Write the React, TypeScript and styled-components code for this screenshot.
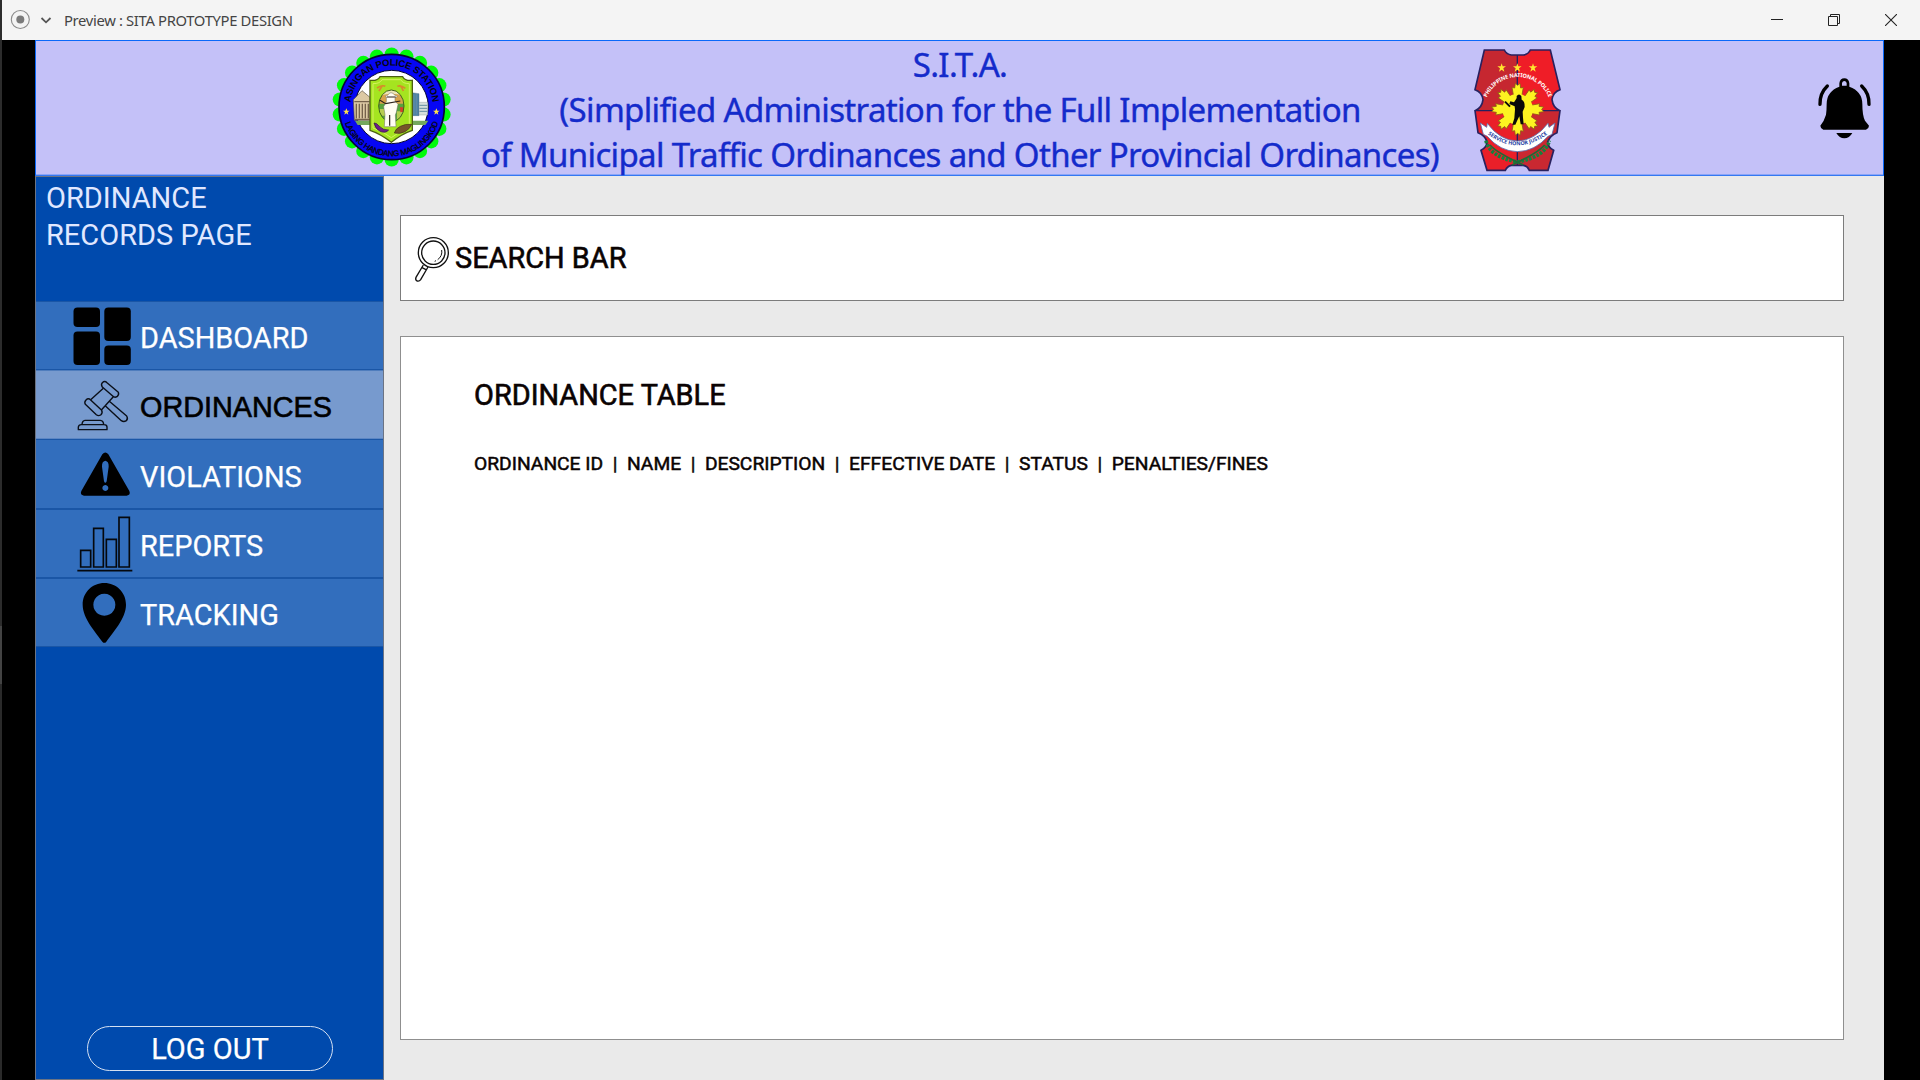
import React from "react";
import styled, { createGlobalStyle, css } from "styled-components";

const Global = createGlobalStyle`
  * { box-sizing: border-box; }
  html, body { margin: 0; height: 100%; background: #000; overflow: hidden; }
  svg { display: block; flex: none; }
`;

const Window = styled.div`
  width: 1920px;
  height: 1080px;
  display: flex;
  background: #000;
  font-family: Roboto, sans-serif;
`;
const Edge = styled.div`
  width: 2px;
  background: linear-gradient(#2c2c2c 0 626px, #434343 626px 684px, #2a2a2a 684px);
`;
const Frame = styled.div`
  flex: 1;
  display: flex;
  flex-direction: column;
`;
const TitleBar = styled.div`
  height: 40px;
  background: #f4f4f4;
  display: flex;
  align-items: center;
  padding: 0 23px 0 8px;
`;
const WindowTitle = styled.span`
  flex: 1;
  font: 14.8px/20px "Noto Sans", sans-serif;
  letter-spacing: -0.34px;
  color: #444;
  margin-left: 12px;
`;
const WindowButtons = styled.div`
  display: flex;
  gap: 45px;
`;
const Stage = styled.div`
  flex: 1;
  width: 1849px;
  margin-left: 33px;
  display: flex;
  flex-direction: column;
  background: #eaeaea;
`;
const Header = styled.header`
  height: 136px;
  border: 1px solid #0a69fa;
  border-bottom: 1px solid #3478f2;
  box-shadow: inset 0 -1px #8ca5f7;
  background: #c4c1f8;
  display: flex;
  padding-left: 284px;
`;
const Seal = styled.svg`
  width: 145px;
  height: 135px;
  margin-left: -1px;
`;
const Badge = styled.svg`
  width: 115px;
  height: 140px;
  margin: -1px 241px 0 5px;
`;
const Bell = styled.svg`
  width: 56px;
  height: 65px;
  margin-top: 34px;
`;
const Heading = styled.h1`
  width: 991px;
  margin: 0;
  padding: 1px 0 0 1px;
  text-align: center;
  white-space: nowrap;
  font: 400 33px/45px "Noto Sans", sans-serif;
  letter-spacing: -0.66px;
  color: #142bcb;
  -webkit-text-stroke: 0.4px #142bcb;
`;
const HeadingLine = styled.span`
  display: block;
`;
const Body = styled.div`
  flex: 1;
  display: flex;
`;
const Sidebar = styled.aside`
  width: 349px;
  border: 1px solid #6c7484;
  background: #004aad;
  display: flex;
  flex-direction: column;
`;
const PageName = styled.div`
  height: 124px;
  padding: 3px 0 0 10px;
  font-size: 29px;
  line-height: 37px;
  color: #e0e8ff;
`;
const NavItem = styled.div<{ $active?: boolean }>`
  height: 69.2px;
  display: flex;
  align-items: center;
  padding-left: 34px;
  background: ${(p) => (p.$active ? "#779ace" : "#326ebd")};
  border-top: 1px solid ${(p) => (p.$active ? "#4f7dbd" : "#1a56a6")};
  border-bottom: 1px solid ${(p) => (p.$active ? "#5b86c4" : "#1a56a6")};
`;
const NavIcon = styled.svg`
  width: 65px;
  height: 67px;
`;
const NavLabel = styled.span<{ $active?: boolean }>`
  padding-top: 5.4px;
  margin-left: 5px;
  font-size: 28.9px;
  line-height: 36px;
  color: #fff;
  -webkit-text-stroke: 0.25px #fff;
  ${(p) =>
    p.$active &&
    css`
      font-family: "Liberation Sans", Arial, sans-serif;
      font-size: 28.8px;
      padding-top: 4.4px;
      color: #000;
      -webkit-text-stroke: 0.6px #000;
    `}
`;
const LogOut = styled.button`
  width: 246px;
  height: 45px;
  margin: auto 0 8px 51px;
  padding: 0;
  border: 1px solid #d4e0f2;
  border-radius: 23px;
  background: none;
  color: #fff;
  font: 29px/34px Roboto, sans-serif;
  -webkit-text-stroke: 0.25px #fff;
`;
const Main = styled.main`
  flex: 1;
  display: flex;
  flex-direction: column;
  gap: 35px;
  padding: 39px 40px 40px 16px;
`;
const SearchBox = styled.div`
  height: 86px;
  border: 1px solid #7c7c7c;
  background: #fff;
  display: flex;
  align-items: center;
  padding-left: 13px;
  font-size: 28.9px;
  line-height: 36px;
  color: #0a0303;
  -webkit-text-stroke: 0.6px #0a0303;
`;
const SearchIcon = styled.svg`
  width: 38px;
  height: 48px;
  margin-top: 2px;
`;
const SearchLabel = styled.span`
  margin-left: 3px;
`;
const TableCard = styled.section`
  flex: 1;
  border: 1px solid #8f8f8f;
  background: #fff;
  padding: 40px 0 0 73px;
  color: #0a0303;
`;
const TableTitle = styled.h2`
  margin: 0;
  font-size: 28.9px;
  line-height: 36px;
  font-weight: 400;
  -webkit-text-stroke: 0.6px #0a0303;
`;
const TableColumns = styled.div`
  margin-top: 39px;
  font-size: 19.24px;
  line-height: 24px;
  white-space: pre;
  -webkit-text-stroke: 0.5px #0a0303;
`;

const range = (n: number) => Array.from({ length: n }, (_, i) => i);

const PoliceSeal = () => (
  <Seal viewBox="0 0 435 405">
    <defs>
      <path id="sealTop" d="M130.3 285.7 A124 124 0 1 1 305.7 285.7" />
      <path id="sealBottom" d="M89.8 124 A148 148 0 1 0 346.2 124" />
      <clipPath id="sealOval"><ellipse cx="217" cy="195" rx="38" ry="48" /></clipPath>
    </defs>
    {range(22).map((i) => (
      <circle key={i} cx={218 + 157 * Math.cos((i * Math.PI) / 11 - Math.PI / 2)} cy={198 + 157 * Math.sin((i * Math.PI) / 11 - Math.PI / 2)} r="21.5" fill="#00fb0a" />
    ))}
    <circle cx="218" cy="198" r="158" fill="#0606f4" stroke="#050530" strokeWidth="5" />
    <circle cx="218" cy="198" r="110" fill="#fff" stroke="#050530" strokeWidth="3" />
    <text fontFamily="Liberation Sans, sans-serif" fontWeight="700" fontSize="28.5" fill="#05050f" textAnchor="middle" letterSpacing="-0.6">
      <textPath href="#sealTop" startOffset="50%">ASINGAN POLICE STATION</textPath>
    </text>
    <text fontFamily="Liberation Sans, sans-serif" fontSize="24" fill="#05050f" stroke="#05050f" strokeWidth="1" textAnchor="middle" letterSpacing="-0.8">
      <textPath href="#sealBottom" startOffset="50%">LAGING HANDANG MAGLINGKOD</textPath>
    </text>
    {[82, 352].map((x) => (
      <path key={x} transform={`translate(${x} 212)`} d="M0 -10 3 -3 10 -3 4 2 6 9 0 5 -6 9 -4 2 -10 -3 -3 -3Z" fill="#ffe34a" />
    ))}
    <path d="M108 239h220l-9 13H116Z" fill="#74a85d" />
    <path d="M103 176 129 149l25 21v68h-48Z" fill="#dcc9a4" stroke="#584b3c" strokeWidth="2" />
    <path d="M106 182h46M107 235h46M112 188v44M121 188v44M130 188v44M139 188v44M148 188v44" stroke="#75624c" strokeWidth="4" />
    <path d="M279 155 300 158v66h-21Z" fill="#4d83a7" stroke="#34566b" />
    <path d="M300 184h26v38h-26Z" fill="#d6dfdd" stroke="#738183" />
    <path d="M301 193h24M301 202h24M301 211h24M285 160v60M292 160v60" stroke="#648da0" strokeWidth="3" />
    <path d="M153 118Q177 120 183 107H251Q257 120 280 118V268Q249 278 217 304Q184 278 153 268Z" fill="#a5e420" stroke="#4c5f12" strokeWidth="4" />
    <path d="M162 128Q183 128 189 116H245Q251 128 271 128V261Q242 270 217 290Q190 270 162 261Z" fill="none" stroke="#d5f25e" strokeWidth="3" />
    <path d="M174 141q16-10 25-5M180 150q8-14 12-17M235 136q11-4 24 6M242 133q8 6 11 17" stroke="#d78b2a" strokeWidth="5" fill="none" />
    <g clipPath="url(#sealOval)">
      <path d="M175 140h90v110h-90Z" fill="#eee6b8" />
      <path d="M175 168q40-20 90 0v28h-90Z" fill="#d8a34b" />
      <path d="M175 188h90v70h-90Z" fill="#58a33d" />
      <path d="M179 204h24v20h-24ZM234 211h24v25h-24Z" fill="#b8cd52" />
      <path d="M243 198l14 2-1 12-12 2Z" fill="#d83f29" />
    </g>
    <ellipse cx="217" cy="195" rx="38" ry="48" fill="none" stroke="#3e6416" strokeWidth="3" />
    <path d="M199 166q3-4 7-3 9-16 22 0 6 0 7 4l-7 3v10l9 10-5 24-3 8 2 35h-35l2-36-4-24 8-15v-13Z" fill="#fffdf3" stroke="#6f6d60" strokeWidth="1.5" />
    <path d="M203 168h27M183 178 200 188 244 180M212 222v32" stroke="#2b211b" strokeWidth="3.5" fill="none" />
    <path d="M165 246q8-1 15 9 12 13 29 12-9 11-26 4-14-7-18-25Z" fill="#6d2187" stroke="#31104a" strokeWidth="2" />
    <path d="M226 276q4-14 18-20 14-8 34-6-5 14-20 22-14 8-32 4Z" fill="#76552a" stroke="#3f3215" strokeWidth="2" />
  </Seal>
);

const SHIELD =
  "M73 30H133Q139 43 154 45H190Q205 43 211 30H271L300 149Q279 156 276 179Q279 204 300 212L291 278Q270 286 263 306Q263 322 281 331L264 391H208Q202 378 190 376H154Q142 378 136 391H81L63 331Q81 322 81 306Q76 286 54 278L45 212Q66 204 69 179Q66 156 45 149Z";

const PnpBadge = () => (
  <Badge viewBox="0 0 345 420">
    <defs>
      <path id="badgeArc" d="M73 222 A101 101 0 1 1 274 222" />
      <path id="ribbonArc" d="M72 274 Q172 358 274 274" />
      <clipPath id="badgeShape">
        <path d={SHIELD} />
      </clipPath>
    </defs>
    <g clipPath="url(#badgeShape)">
      <path d="M0 0h172v212H0Z" fill="#c62730" />
      <path d="M172 0h173v212H172Z" fill="#ef1d27" />
      <path d="M0 212h172v208H0Z" fill="#ea1f29" />
      <path d="M172 212h173v208H172Z" fill="#c92831" />
      <path d="M172 20v380M40 212h265" stroke="#24205f" strokeWidth="4" />
    </g>
    <path d={SHIELD} fill="none" stroke="#28215f" strokeWidth="5" />
    {[125, 172, 219].map((x) => (
      <path key={x} transform={`translate(${x} 83)`} d="M0 -13 3 -4 13 -4 5 2 8 12 0 6 -8 12 -5 2 -13 -4 -3 -4Z" fill="#ffe52e" />
    ))}
    <text fontFamily="Noto Sans, sans-serif" fontWeight="700" fontSize="16.5" fill="#fff" textAnchor="middle" letterSpacing="-0.5">
      <textPath href="#badgeArc" startOffset="50%">PHILIPPINE NATIONAL POLICE</textPath>
    </text>
    {range(8).map((i) => (
      <path key={i} transform={`translate(173 208) rotate(${i * 45})`} d="M-12 -38 -17 -66 -9 -64 -7 -78 0 -72 7 -78 9 -64 17 -66 12 -38Z" fill="#fdf321" stroke="#8f5a13" strokeWidth="2.5" />
    ))}
    <circle cx="173" cy="208" r="46" fill="#fdf321" />
    <path d="M170 168q7-9 14 0l1 11q10 4 9 22l-6 14 1 18 2 20h-9l-4-24-6 12-6 13h-9l6-19 2-27-1-9-16-7 3-8 11 3 6-9 2-4Z" fill="#090909" />
    <path d="M135 185l15 15" stroke="#090909" strokeWidth="6" />
    <path d="M78 302Q88 350 172 366Q256 350 268 302" fill="none" stroke="#16813c" strokeWidth="11" strokeDasharray="8 4" />
    <path d="M90 315Q110 338 190 375M254 315Q235 338 156 375" fill="none" stroke="#1c6b35" strokeWidth="5" />
    <path d="M61 249 80 262 82 250Q120 302 172 303Q224 302 264 250L267 262 285 249 276 283 264 289Q224 334 172 335Q120 334 82 289L70 283Z" fill="#fff" stroke="#5a6eae" strokeWidth="2.5" />
    <text fontFamily="Noto Sans, sans-serif" fontWeight="700" fontSize="16" fill="#2540a3" textAnchor="middle">
      <textPath href="#ribbonArc" startOffset="50%">SERVICE HONOR JUSTICE</textPath>
    </text>
  </Badge>
);

const DashboardIcon = () => (
  <NavIcon viewBox="70 302 65 67">
    <rect x="73.5" y="307.5" width="26.5" height="19.5" rx="4" />
    <rect x="73.5" y="331.5" width="26.5" height="33.5" rx="4" />
    <rect x="104.3" y="307.5" width="26.5" height="33.5" rx="4" />
    <rect x="104.3" y="345.5" width="26.5" height="19.5" rx="4" />
  </NavIcon>
);
const GavelIcon = () => (
  <NavIcon viewBox="120 603 195 201" fill="none" stroke="#0a0f18" strokeWidth="4.2" strokeLinejoin="round">
    <path d="M217 638q7-7 14 0l34 29q3 7-4 13-7 4-12-1l-32-28q-5-7 0-13Z" />
    <path d="M168 690q7-7 14 0l33 31q4 7-3 14-7 4-13-1l-33-31q-4-7 2-13Z" />
    <path d="M220 655 182 689M250 680 214 720M238 694l52 44q5 8-1 14-8 5-15 0l-50-46" />
    <path d="M145 779v-8q1-7 9-7h68q9 0 9 7v8ZM156 763q1-11 9-12h46q9 1 10 12" />
  </NavIcon>
);
const WarningIcon = () => (
  <NavIcon viewBox="120 31 195 201">
    <path
      fillRule="evenodd"
      d="M217 74q9-11 18 0l63 110q5 12-8 14H162q-13-2-8-14ZM226 93q-11 2-10 18l6 44q4 9 8 0l6-44q1-16-10-18ZM226 166a9 9 0 1 0 .1 0Z"
    />
  </NavIcon>
);
const ReportsIcon = () => (
  <NavIcon viewBox="120 240 195 201" fill="none" stroke="#05080d" strokeWidth="5">
    <path d="M152 361h30v50h-30ZM191 295h29v116h-29ZM229 328h30v83h-30ZM267 262h31v149h-31ZM142 422h165" />
  </NavIcon>
);
const TrackingIcon = () => (
  <NavIcon viewBox="120 447 195 201">
    <path fillRule="evenodd" d="M223 459c36 0 65 28 65 65 0 42-41 84-59 111q-6 7-12 0c-18-27-59-69-59-111 0-37 29-65 65-65ZM223 491a33 33 0 1 0 .1 0Z" />
  </NavIcon>
);

const NAV = [
  { label: "DASHBOARD", Icon: DashboardIcon },
  { label: "ORDINANCES", Icon: GavelIcon, active: true },
  { label: "VIOLATIONS", Icon: WarningIcon },
  { label: "REPORTS", Icon: ReportsIcon },
  { label: "TRACKING", Icon: TrackingIcon },
];
const COLUMNS = ["ORDINANCE ID", "NAME", "DESCRIPTION", "EFFECTIVE DATE", "STATUS", "PENALTIES/FINES"];

export default function App() {
  return (
    <Window>
      <Global />
      <Edge />
      <Frame>
        <TitleBar>
          <svg width="42" height="22" viewBox="10 9 42 22" fill="none">
            <circle cx="20.3" cy="19.5" r="9" stroke="#8a8a8a" strokeWidth="1.1" />
            <circle cx="20.3" cy="19.5" r="4" fill="#7b7b7b" />
            <path d="M41.5 18l4.5 4.3 4.5-4.3" stroke="#555" strokeWidth="1.8" />
          </svg>
          <WindowTitle>Preview : SITA PROTOTYPE DESIGN</WindowTitle>
          <WindowButtons>
            <svg width="12" height="12" viewBox="0 0 12 12"><path d="M0 5.5h12" stroke="#222" /></svg>
            <svg width="12" height="12" viewBox="0 0 12 12" fill="none" stroke="#222"><path d="M.5 2.5h9v9h-9ZM2.5 2.5v-2h9v9h-2" /></svg>
            <svg width="12" height="12" viewBox="0 0 12 12"><path d="M0 0l12 12M12 0L0 12" stroke="#222" strokeWidth="1.1" /></svg>
          </WindowButtons>
        </TitleBar>
        <Stage>
          <Header>
            <PoliceSeal />
            <Heading>
              <HeadingLine>S.I.T.A.</HeadingLine>
              <HeadingLine>(Simplified Administration for the Full Implementation</HeadingLine>
              <HeadingLine>of Municipal Traffic Ordinances and Other Provincial Ordinances)</HeadingLine>
            </Heading>
            <PnpBadge />
            <Bell viewBox="288 225 168 195">
              <path
                fillRule="evenodd"
                d="M358 260V250q2-15 15-15t15 15v10q39 14 39 52 0 35 8 50l12 15q0 8-9 12H310q-9-4-9-12 12-15 17-33 2-14 2-32 0-38 38-52ZM366 257h14v-8q-2-6-7-6t-7 6Z"
              />
              <path d="M349 399h48q-9 16-24 16t-24-16Z" />
              <path d="M322 258Q299 280 300 313M425 258Q448 280 447 313" fill="none" stroke="#000" strokeWidth="10" strokeLinecap="round" />
            </Bell>
          </Header>
          <Body>
            <Sidebar>
              <PageName>
                ORDINANCE
                <br />
                RECORDS PAGE
              </PageName>
              {NAV.map(({ label, Icon, active }) => (
                <NavItem key={label} $active={active}>
                  <Icon />
                  <NavLabel $active={active}>{label}</NavLabel>
                </NavItem>
              ))}
              <LogOut>LOG OUT</LogOut>
            </Sidebar>
            <Main>
              <SearchBox>
                <SearchIcon viewBox="72 135 114 144" fill="none" stroke="#111" strokeWidth="4">
                  <circle cx="130" cy="188" r="45" />
                  <circle cx="130" cy="188" r="35" />
                  <path d="M155 180q3 18-12 29M138 212l-4 2" strokeWidth="3" />
                  <path d="M100 225 78 262q-3 8 3 11 7 2 11-4l22-38M96 233l12 6" />
                </SearchIcon>
                <SearchLabel>SEARCH BAR</SearchLabel>
              </SearchBox>
              <TableCard>
                <TableTitle>ORDINANCE TABLE</TableTitle>
                <TableColumns>{COLUMNS.join("  |  ")}</TableColumns>
              </TableCard>
            </Main>
          </Body>
        </Stage>
      </Frame>
    </Window>
  );
}
